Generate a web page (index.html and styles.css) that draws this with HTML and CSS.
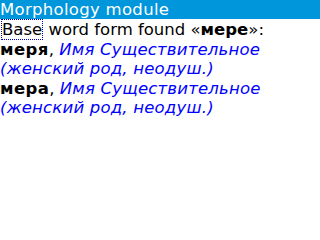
FILE: index.html
```html
<!DOCTYPE html>
<html>
<head>
<meta charset="utf-8">
<link rel="stylesheet" href="styles.css">
</head>
<body>
<div class="title">Morphology module</div>
<div class="content">
  <div class="line"><span class="focus">Base</span> word form found «<b>мере</b>»:</div>
  <div class="line"><b class="word">меря</b>, <i class="info">Имя Существительное</i></div>
  <div class="line"><i class="info">(женский род, неодуш.)</i></div>
  <div class="line"><b class="word">мера</b>, <i class="info">Имя Существительное</i></div>
  <div class="line"><i class="info">(женский род, неодуш.)</i></div>
</div>
</body>
</html>
```

FILE: styles.css
```css
html, body {
  margin: 0;
  padding: 0;
  background: #ffffff;
  width: 320px;
  height: 240px;
  overflow: hidden;
}
body {
  font-family: "DejaVu Sans", sans-serif;
  font-size: 16.5px;
  color: #000000;
}
.title {
  background: #0096dc;
  color: #ffffff;
  height: 19px;
  line-height: 20px;
  letter-spacing: 0.3px;
  white-space: nowrap;
  overflow: hidden;
}
.content {
  display: flex;
  flex-direction: column;
  padding-top: 1px;
}
.line {
  line-height: 19.5px;
  white-space: nowrap;
}
.focus {
  border: 1px dotted #0000b0;
  margin-left: 1px;
}
.word {
  letter-spacing: 0.4px;
}
.info {
  color: #0000ff;
  letter-spacing: 0.2px;
}
b {
  font-weight: bold;
}
```
